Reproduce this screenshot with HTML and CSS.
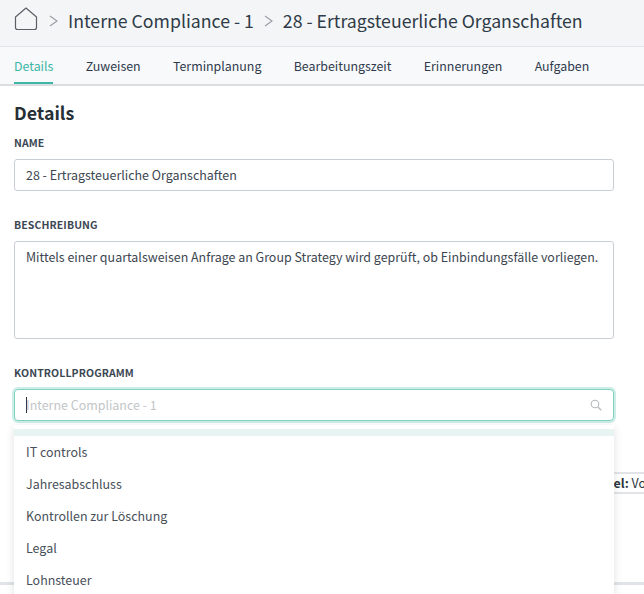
FILE: index.html
```html
<!DOCTYPE html>
<html>
<head>
    <title>Details</title>
    <link rel="stylesheet" href="styles.css">
</head>
<body>
    <div class="header">
        <svg class="home" width="24" height="24" viewBox="0 0 24 24">
            <path d="M1.5 10 L12 1 L22.5 10 V20.5 Q22.5 22.5 20.5 22.5 H3.5 Q1.5 22.5 1.5 20.5 Z" fill="none" stroke="#5c6066" stroke-width="1.2" stroke-linejoin="round"/>
        </svg>
        <svg class="chevron" width="9" height="12" viewBox="0 0 9 12"><path d="M1 1 L8 6 L1 11" fill="none" stroke="#9a9fa6" stroke-width="1.2"/></svg>
        <span class="crumb">Interne Compliance - 1</span>
        <svg class="chevron" width="9" height="12" viewBox="0 0 9 12"><path d="M1 1 L8 6 L1 11" fill="none" stroke="#9a9fa6" stroke-width="1.2"/></svg>
        <span class="crumb">28 - Ertragsteuerliche Organschaften</span>
    </div>

    <div class="tabs">
        <a class="tab active">Details</a>
        <a class="tab">Zuweisen</a>
        <a class="tab">Terminplanung</a>
        <a class="tab">Bearbeitungszeit</a>
        <a class="tab">Erinnerungen</a>
        <a class="tab">Aufgaben</a>
    </div>

    <div class="content">
        <h1>Details</h1>

        <label>NAME</label>
        <div class="input">28 - Ertragsteuerliche Organschaften</div>

        <label class="label-gap">BESCHREIBUNG</label>
        <div class="input textarea">Mittels einer quartalsweisen Anfrage an Group Strategy wird geprüft, ob Einbindungsfälle vorliegen.</div>

        <label class="label-gap">KONTROLLPROGRAMM</label>
        <div class="select-wrap">
            <div class="input focused">
                <span class="caret"></span>
                <span class="placeholder">Interne Compliance - 1</span>
                <svg class="search" width="12" height="12" viewBox="0 0 12 12">
                    <circle cx="5" cy="5" r="3.8" fill="none" stroke="#b5b8bb" stroke-width="1.1"/>
                    <path d="M8 8 L11.2 11.2" stroke="#b5b8bb" stroke-width="1.3"/>
                </svg>
            </div>
            <div class="menu">
                <div class="menu-top"></div>
                <div class="option">IT controls</div>
                <div class="option">Jahresabschluss</div>
                <div class="option">Kontrollen zur Löschung</div>
                <div class="option">Legal</div>
                <div class="option">Lohnsteuer</div>
            </div>
        </div>

        <div class="behind"><b>Ziel:</b> Vo</div>
        <div class="behind-line"></div>
    </div>
</body>
</html>
```

FILE: styles.css
```css
body {
    font-family: "Noto Sans CJK SC", "Source Sans Pro", "Noto Sans", sans-serif;
    margin: 0;
    height: 594px;
    overflow: hidden;
    background: #fff;
    color: #2c343c;
}
.header {
    box-sizing: border-box;
    height: 47px;
    display: flex;
    align-items: center;
    padding: 0 0 4px 14px;
    background: #f4f5f7;
    border-bottom: 1px solid #e2e4e7;
}
.home {
    margin-right: 11px;
    margin-bottom: 5px;
}
.chevron {
    margin-right: 10px;
}
.crumb {
    font-size: 17.7px;
    line-height: 24px;
    margin-right: 10px;
    margin-bottom: 3px;
    color: #2f3b47;
}
.tabs {
    height: 37px;
    display: flex;
    gap: 32.3px;
    padding-left: 14px;
    background: #f8f9fa;
    border-bottom: 2px solid #dcdddf;
}
.tab {
    font-size: 12.4px;
    line-height: 38px;
    color: #2f3b4d;
}
.tab.active {
    box-sizing: border-box;
    color: #3cb6a6;
    height: 37px;
    border-bottom: 2px solid #3cb6a6;
}
.content {
    position: relative;
    padding: 0 30px 0 14px;
}
h1 {
    margin: 0;
    padding-top: 13px;
    font-size: 17.8px;
    line-height: 26px;
    font-weight: 700;
    color: #262e36;
}
label {
    display: block;
    font-size: 10.5px;
    line-height: 16px;
    font-weight: 700;
    letter-spacing: 0.1px;
    color: #3c4754;
    margin-top: 10px;
    margin-bottom: 8px;
}
.label-gap {
    margin-top: 26px;
}
.input {
    box-sizing: border-box;
    height: 32px;
    padding: 0 11px;
    font-size: 12.45px;
    line-height: 30px;
    color: #3c4650;
    background: #fff;
    border: 1px solid #c9ced4;
    border-radius: 3px;
}
.textarea {
    height: 98px;
}
.select-wrap {
    position: relative;
}
.input.focused {
    display: flex;
    align-items: center;
    border-color: #84d2c3;
    border-radius: 4px;
    box-shadow: 0 0 0 2px #cdeee7;
}
.caret {
    width: 1px;
    height: 16px;
    background: #2c343c;
}
.placeholder {
    color: #c2c5c8;
    margin-left: -1px;
    flex: 1;
}
.menu {
    position: absolute;
    z-index: 2;
    top: 36px;
    left: 0;
    right: 0;
    height: 200px;
    padding-top: 4px;
    background: #fff;
    box-shadow: 0 2px 8px rgba(40, 50, 60, 0.14);
}
.menu-top {
    height: 7px;
    background: #e7f4f1;
}
.option {
    height: 32px;
    padding-left: 12px;
    font-size: 12.45px;
    line-height: 32px;
    color: #474f58;
}
.behind {
    position: absolute;
    top: 386px;
    left: 300px;
    width: 346px;
    height: 22px;
    border-top: 2px solid #e2e4e8;
    border-bottom: 2px solid #e2e4e8;
    font-size: 12.45px;
    line-height: 18px;
    text-align: right;
    white-space: nowrap;
    box-sizing: border-box;
}
.behind-line {
    position: absolute;
    top: 496px;
    left: 0;
    width: 644px;
    height: 3px;
    background: #e0e4e8;
}
```
